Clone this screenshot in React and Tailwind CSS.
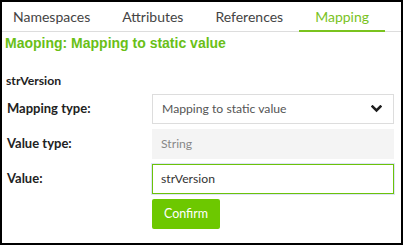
const tabs = ['Namespaces', 'Attributes', 'References', 'Mapping'];

export default function App() {
  const active = 'Mapping';

  return (
    <div className="w-[403px] h-[245px] border-2 border-black bg-white overflow-hidden font-['Lato',sans-serif] text-[#333]">
      {/* Tabs */}
      <div className="flex h-[30px] border-b border-[#ddd] pl-[11px]">
        {tabs.map((t, i) => (
          <div
            key={t}
            className={`flex items-center text-[14px] ${i === 0 ? 'pr-4' : 'px-4'} ${
              t === active ? 'text-[#7ac31e] border-b-2 border-[#7ac31e] -mb-px' : 'text-[#444]'
            }`}
          >
            {t}
          </div>
        ))}
      </div>

      {/* Heading */}
      <h2 className="mt-[3px] pl-[3px] text-[14px] leading-4 font-bold text-[#6abf17] font-['Liberation_Sans',Arial,sans-serif]">
        Maoping: Mapping to static value
      </h2>

      <div className="pl-[4px] pr-[7px]">
        <p className="mt-[20px] text-[12.2px] leading-5 font-bold text-[#222]">strVersion</p>

        <div className="mt-[3px] flex flex-col gap-[5px]">
          <Row label="Mapping type:">
            <div className="h-[30px] flex items-center justify-between border border-[#ddd] pl-[9px] pr-[11px] text-[12.2px] text-[#555]">
              <span>Mapping to static value</span>
              <svg width="11" height="8" viewBox="0 0 11 8" className="text-[#1e1e1e]">
                <path d="M1.6 1.6 L5.5 5.5 L9.4 1.6" fill="none" stroke="currentColor" strokeWidth="2.6" strokeLinecap="square" />
              </svg>
            </div>
          </Row>
          <Row label="Value type:">
            <div className="h-[30px] flex items-center bg-[#f4f4f4] px-[9px] text-[12.2px] text-[#888]">String</div>
          </Row>
          <Row label="Value:">
            <div className="h-[30px] flex items-center border border-[#6cc20a] outline outline-1 outline-[#dde3f7] px-[8px] text-[12.2px] text-[#333]">
              strVersion
            </div>
          </Row>
          <div className="pl-[146px]">
            <button className="h-[30px] w-[68px] rounded-[2px] bg-[#6dc800] text-white text-[12.5px]">Confirm</button>
          </div>
        </div>
      </div>
    </div>
  );
}

function Row({ label, children }) {
  return (
    <div className="flex items-center">
      <div className="w-[146px] pl-[1px] text-[13px] font-bold text-[#222]">{label}</div>
      <div className="flex-1">{children}</div>
    </div>
  );
}
